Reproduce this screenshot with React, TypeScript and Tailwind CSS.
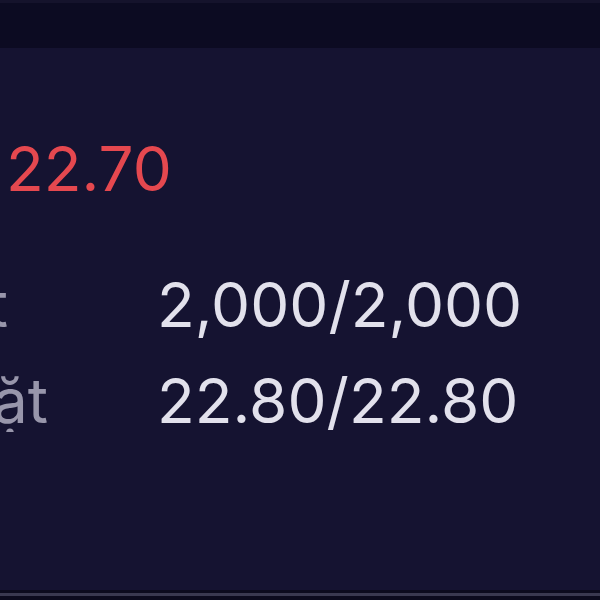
const rows = [
  { label: 'KL khớp/đặt', value: '2,000/2,000', cut: 'mr-[149px]' },
  { label: 'Giá khớp/đặt', value: '22.80/22.80', cut: 'mr-[109px]' },
]

const App = () => {
  return (
    <div className="flex flex-col w-[600px] h-[600px] overflow-hidden bg-[#0c0b20] font-['Inter',sans-serif]">
      {/* top bar */}
      <div className="h-[48px] shrink-0 bg-[#0c0b22] border-t-[3px] border-[#15132c]" />

      {/* order detail panel */}
      <div className="flex flex-col flex-1 bg-[#151331] pt-[90px]">
        <div className="pl-[6px] text-[62px] leading-[62px] text-[#e5484f]">22.70</div>

        <div className="flex flex-col gap-[34px] mt-[74px]">
          {rows.map((row) => (
            <div key={row.value} className="flex text-[62px] leading-[62px]">
              <div className="flex justify-end w-[157px] shrink-0 overflow-hidden">
                <span className={`shrink-0 whitespace-nowrap text-[#9896ab] ${row.cut}`}>{row.label}</span>
              </div>
              <span className="whitespace-nowrap text-[#e2e1ec]">{row.value}</span>
            </div>
          ))}
        </div>
      </div>

      {/* bottom edge */}
      <div className="h-[3px] shrink-0 bg-[#0c0b1e]" />
      <div className="h-[3px] shrink-0 bg-[#3a3950]" />
      <div className="h-[4px] shrink-0 bg-[#0c0b1e]" />
    </div>
  )
}

export default App
